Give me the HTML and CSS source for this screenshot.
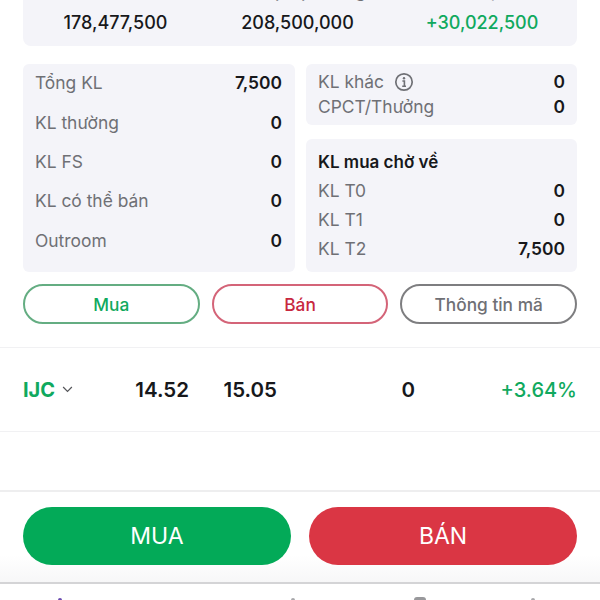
FILE: index.html
```html
<!DOCTYPE html>
<html lang="vi">
<head>
<meta charset="utf-8">
<title>Chi tiết mã</title>
<link rel="stylesheet" href="styles.css">
</head>
<body>
<div class="screen">
  <section class="summary">
    <div class="summary-labels"><span>Giá vốn</span><span>Giá trị thị trường</span><span>Lãi/lỗ dự kiến</span></div>
    <div class="summary-values"><span>178,477,500</span><span>208,500,000</span><span class="up">+30,022,500</span></div>
  </section>
  <section class="details">
    <div class="card left">
      <div class="row"><span class="k">Tổng KL</span><b>7,500</b></div>
      <div class="row"><span class="k">KL thường</span><b>0</b></div>
      <div class="row"><span class="k">KL FS</span><b>0</b></div>
      <div class="row"><span class="k">KL có thể bán</span><b>0</b></div>
      <div class="row"><span class="k">Outroom</span><b>0</b></div>
    </div>
    <div class="right">
      <div class="card other">
        <div class="row"><span class="k with-icon">KL khác
          <svg class="info" viewBox="0 0 20 20" width="20" height="20"><circle cx="10" cy="10" r="8.2" fill="none" stroke="#6f7075" stroke-width="1.7"/><circle cx="10" cy="6.2" r="1.2" fill="#6f7075"/><path d="M8.4 9h2v5.2M8.2 14.2h3.8" fill="none" stroke="#6f7075" stroke-width="1.6"/></svg></span><b>0</b></div>
        <div class="row"><span class="k">CPCT/Thưởng</span><b>0</b></div>
      </div>
      <div class="card pending">
        <div class="pending-title">KL mua chờ về</div>
        <div class="row"><span class="k">KL T0</span><b>0</b></div>
        <div class="row"><span class="k">KL T1</span><b>0</b></div>
        <div class="row"><span class="k">KL T2</span><b>7,500</b></div>
      </div>
    </div>
  </section>
  <section class="actions">
    <button class="pill pill-buy">Mua</button>
    <button class="pill pill-sell">Bán</button>
    <button class="pill pill-info">Thông tin mã</button>
  </section>
  <section class="stock">
    <div class="sym">IJC <svg viewBox="0 0 12 8" width="11" height="7"><path d="M1 1.2l5 5 5-5" fill="none" stroke="#55565a" stroke-width="1.4"/></svg></div>
    <div class="c1">14.52</div>
    <div class="c2">15.05</div>
    <div class="c3">0</div>
    <div class="c4">+3.64%</div>
  </section>
  <section class="trade">
    <button class="cta buy">MUA</button>
    <button class="cta sell">BÁN</button>
  </section>
  <nav class="tabbar">
    <span class="tip tip-active"></span>
    <span></span>
    <span class="tip"></span>
    <span class="tip tip-wide"></span>
    <span class="tip"></span>
  </nav>
</div>
</body>
</html>
```
FILE: styles.css
```css
* { box-sizing: border-box; }
html, body { margin: 0; height: 100%; }
body { background: #fff; font-family: Inter, "Noto Sans", sans-serif; color: #17181b; overflow: hidden; }
.screen { width: 600px; height: 600px; overflow: hidden; display: flex; flex-direction: column; }
.summary { flex: none; height: 46px; margin: 0 23px; background: #f4f4f9; border-radius: 0 0 8px 8px; overflow: hidden; }
.summary-labels, .summary-values { display: grid; grid-template-columns: 185px 179px 190px; text-align: center; font-size: 18px; }
.summary-labels { height: 20px; margin-top: -19px; color: #6f7075; line-height: 20px; white-space: nowrap; }
.summary-values { font-weight: 500; line-height: 22px; margin-top: 11px; }
.up { color: #10a95e; }
.details { flex: none; display: flex; gap: 11px; margin: 18px 23px 0; height: 208px; }
.card { background: #f4f4f9; border-radius: 6px; }
.left { width: 272px; padding: 0 13px 0 12px; }
.left .row { height: 39.4px; }
.left .row:first-child { margin-top: -1px; }
.right { width: 271px; display: flex; flex-direction: column; gap: 14px; }
.other { height: 61px; padding: 5px 12px 0; }
.other .row { height: 25px; }
.pending { height: 133px; padding: 10px 12px 0; }
.pending-title { font-size: 17px; font-weight: 600; line-height: 26px; margin-bottom: 1px; }
.pending .row { height: 29px; }
.row { display: flex; align-items: center; justify-content: space-between; font-size: 17.4px; }
.row b { font-weight: 600; }
.k { color: #6f7075; font-weight: 400; }
.with-icon { display: flex; align-items: center; gap: 10px; }
.info { display: block; }
.actions { flex: none; display: flex; gap: 12px; margin: 12px 23px 0; }
.pill { flex: 1; height: 40px; border-radius: 20px; background: #fff; font: 500 17.3px Inter, sans-serif; border: 2px solid; }
.pill-buy { color: #10a95e; border-color: #64ad82; }
.pill-sell { color: #c8283f; border-color: #d46478; }
.pill-info { color: #6f7075; border-color: #7e7e80; }
.stock { flex: none; margin-top: 23px; height: 85px; border-top: 1px solid #f1f1f3; border-bottom: 1px solid #f1f1f3; display: grid; grid-template-columns: 23px 100px 66px 88px 138px 162px 23px; align-items: center; font-size: 20.5px; font-weight: 600; }
.sym { grid-column: 2; color: #10a95e; display: flex; align-items: center; gap: 7px; font-weight: 700; font-size: 20px; }
.c1, .c2, .c3 { text-align: right; }
.c4 { color: #10a95e; text-align: right; font-weight: 500; font-size: 20px; }
.trade { flex: none; margin-top: 58px; height: 94px; border-top: 2px solid #eeeeef; border-bottom: 2px solid #d4d4d6; padding: 15px 23px 0; display: flex; gap: 18px; background: linear-gradient(#fff 70%, #f7f7f8); }
.cta { flex: 1; height: 58px; border: 0; border-radius: 29px; color: #fff; font: 400 23px Inter, sans-serif; }
.buy { background: #03aa58; }
.sell { background: #da3644; }
.tabbar { flex: 1; display: grid; grid-template-columns: 120px 120px 106px 148px 78px; justify-items: center; align-items: end; }
.tip { display: block; width: 4px; height: 2px; background: #a8a8ab; border-radius: 2px 2px 0 0; }
.tip-active { background: #6a4ab0; }
.tip-wide { width: 12px; height: 3px; border-radius: 6px 6px 0 0; background: #98989b; }
```
